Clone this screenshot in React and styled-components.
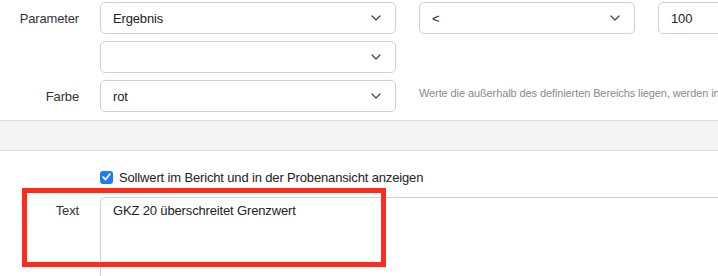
import styled, { createGlobalStyle } from "styled-components";

const Global = createGlobalStyle`
  html, body {
    margin: 0;
    padding: 0;
    background: #fff;
    overflow: hidden;
  }
  body {
    font-family: "Liberation Sans", Arial, sans-serif;
    font-size: 13px;
    letter-spacing: -0.15px;
    color: #333;
  }
`;

const Page = styled.div`
  position: relative;
  width: 900px;
  padding-top: 2px;
`;

const Row = styled.div`
  display: flex;
  align-items: center;
  height: 32px;
  margin-bottom: ${(p) => p.gap || 7}px;
`;

const Label = styled.div`
  width: 79px;
  padding-right: 21px;
  text-align: right;
  flex-shrink: 0;
  color: #333;
`;

const Controls = styled.div`
  display: flex;
  align-items: center;
  gap: 23px;
`;

const SelectBox = styled.div`
  box-sizing: border-box;
  width: ${(p) => p.width}px;
  height: 32px;
  border: 1px solid #cfd3d8;
  border-radius: 5px;
  padding: 0 12px;
  display: flex;
  align-items: center;
  justify-content: space-between;
  background: #fff;
  color: #222;
`;

const Chevron = styled.svg`
  width: 10px;
  height: 6px;
  margin-right: 2px;
  flex-shrink: 0;
`;

const Input = styled.div`
  box-sizing: border-box;
  width: 160px;
  height: 32px;
  border: 1px solid #cfd3d8;
  border-radius: 5px;
  padding: 0 12px;
  display: flex;
  align-items: center;
  color: #222;
`;

const Hint = styled.div`
  font-size: 11px;
  letter-spacing: -0.1px;
  color: #8a8a8a;
  white-space: nowrap;
  padding-bottom: 6px;
`;

const Band = styled.div`
  height: 29px;
  background: #f4f4f4;
  border-top: 1px solid #dcdcdc;
  border-bottom: 1px solid #dcdcdc;
  margin-top: 8px;
`;

const CheckRow = styled.div`
  display: flex;
  align-items: center;
  gap: 6px;
  padding-left: 100px;
  margin-top: 19px;
  height: 14px;
  color: #222;
`;

const Box = styled.span`
  width: 13px;
  height: 13px;
  border-radius: 3px;
  background: #1f7bf2;
  display: flex;
  align-items: center;
  justify-content: center;
`;

const TextRow = styled.div`
  display: flex;
  margin-top: 13px;
`;

const TextLabel = styled(Label)`
  padding-top: 6px;
`;

const TextArea = styled.div`
  flex: 1;
  height: 90px;
  border-top: 1px solid #cfd3d8;
  border-left: 1px solid #cfd3d8;
  border-top-left-radius: 5px;
  padding: 5px 12px;
  color: #222;
`;

const Highlight = styled.div`
  position: absolute;
  left: 22px;
  top: 188px;
  width: 354px;
  height: 69px;
  border: 5px solid #ff2b1c;
  pointer-events: none;
`;

function Select({ width, value }) {
  return (
    <SelectBox width={width}>
      <span>{value}</span>
      <Chevron viewBox="0 0 10 6">
        <path d="M1 1l4 4 4-4" fill="none" stroke="#444" strokeWidth="1.2" strokeLinecap="round" strokeLinejoin="round" />
      </Chevron>
    </SelectBox>
  );
}

export default function App() {
  return (
    <>
      <Global />
      <Page>
        <Row>
          <Label>Parameter</Label>
          <Controls>
            <Select width={296} value="Ergebnis" />
            <Select width={216} value="<" />
            <Input>100</Input>
          </Controls>
        </Row>
        <Row>
          <Label />
          <Controls>
            <Select width={296} value="" />
          </Controls>
        </Row>
        <Row gap={0}>
          <Label>Farbe</Label>
          <Controls>
            <Select width={296} value="rot" />
            <Hint>Werte die außerhalb des definierten Bereichs liegen, werden in der Farbe markiert</Hint>
          </Controls>
        </Row>
        <Band />
        <CheckRow>
          <Box>
            <svg width="9" height="8" viewBox="0 0 9 8">
              <path d="M1.2 4.2l2.3 2.3L7.8 1.3" fill="none" stroke="#fff" strokeWidth="1.8" strokeLinecap="round" strokeLinejoin="round" />
            </svg>
          </Box>
          <span>Sollwert im Bericht und in der Probenansicht anzeigen</span>
        </CheckRow>
        <TextRow>
          <TextLabel>Text</TextLabel>
          <TextArea>GKZ 20 überschreitet Grenzwert</TextArea>
        </TextRow>
        <Highlight />
      </Page>
    </>
  );
}
